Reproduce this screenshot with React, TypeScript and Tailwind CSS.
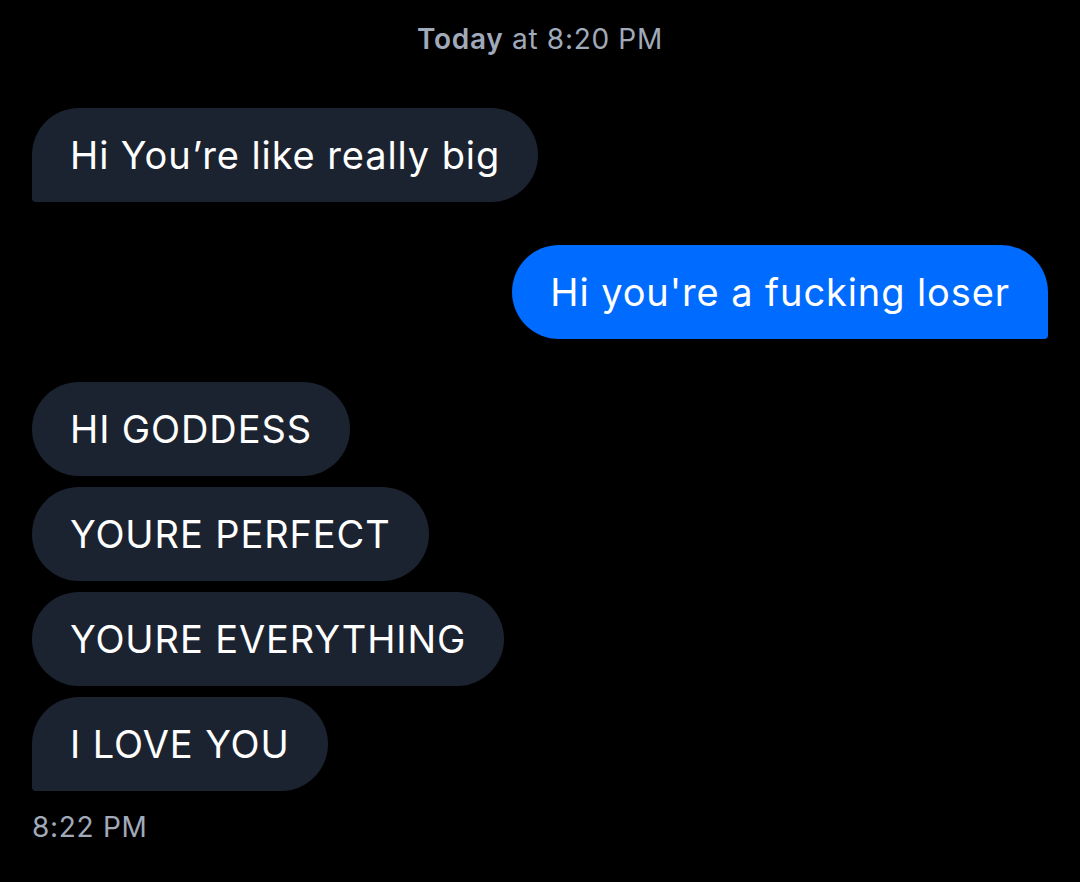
import React from 'react';

type Msg = { text: string; last?: boolean };

const incomingTop: Msg[] = [{ text: 'Hi You’re like really big', last: true }];
const incomingBottom: Msg[] = [
  { text: 'HI GODDESS' },
  { text: 'YOURE PERFECT' },
  { text: 'YOURE EVERYTHING' },
  { text: 'I LOVE YOU', last: true },
];

const Incoming = ({ text, last }: Msg) => (
  <div
    className={`self-start h-[94px] flex items-center px-[38px] bg-[#1c2330] text-white text-[38px] tracking-[0.9px] rounded-[47px] ${
      last ? 'rounded-bl-[4px]' : ''
    }`}
  >
    {text}
  </div>
);

const Outgoing = ({ text }: Msg) => (
  <div className="self-end h-[94px] flex items-center px-[38px] bg-[#006bff] text-white text-[38px] tracking-[0.9px] rounded-[47px] rounded-br-[4px]">
    {text}
  </div>
);

export default function App() {
  return (
    <div
      className="w-[1080px] h-[882px] bg-black flex flex-col px-[32px] overflow-hidden"
      style={{ fontFamily: 'Inter, "Noto Sans", sans-serif' }}
    >
      <div className="h-[80px] flex items-center justify-center text-[28px] text-[#a1aaba] tracking-[0.7px] pb-[2px]">
        <span className="font-semibold">Today</span>
        <span>&nbsp;at 8:20 PM</span>
      </div>

      <div className="flex flex-col pt-[28px]">
        {incomingTop.map((m) => (
          <Incoming key={m.text} {...m} />
        ))}
        <div className="mt-[43px] flex flex-col">
          <Outgoing text="Hi you're a fucking loser" />
        </div>
        <div className="mt-[43px] flex flex-col gap-[11px]">
          {incomingBottom.map((m) => (
            <Incoming key={m.text} {...m} />
          ))}
        </div>
        <div className="mt-[16px] text-[28px] text-[#a1aaba] leading-[40px] tracking-[0.7px]">8:22 PM</div>
      </div>
    </div>
  );
}
